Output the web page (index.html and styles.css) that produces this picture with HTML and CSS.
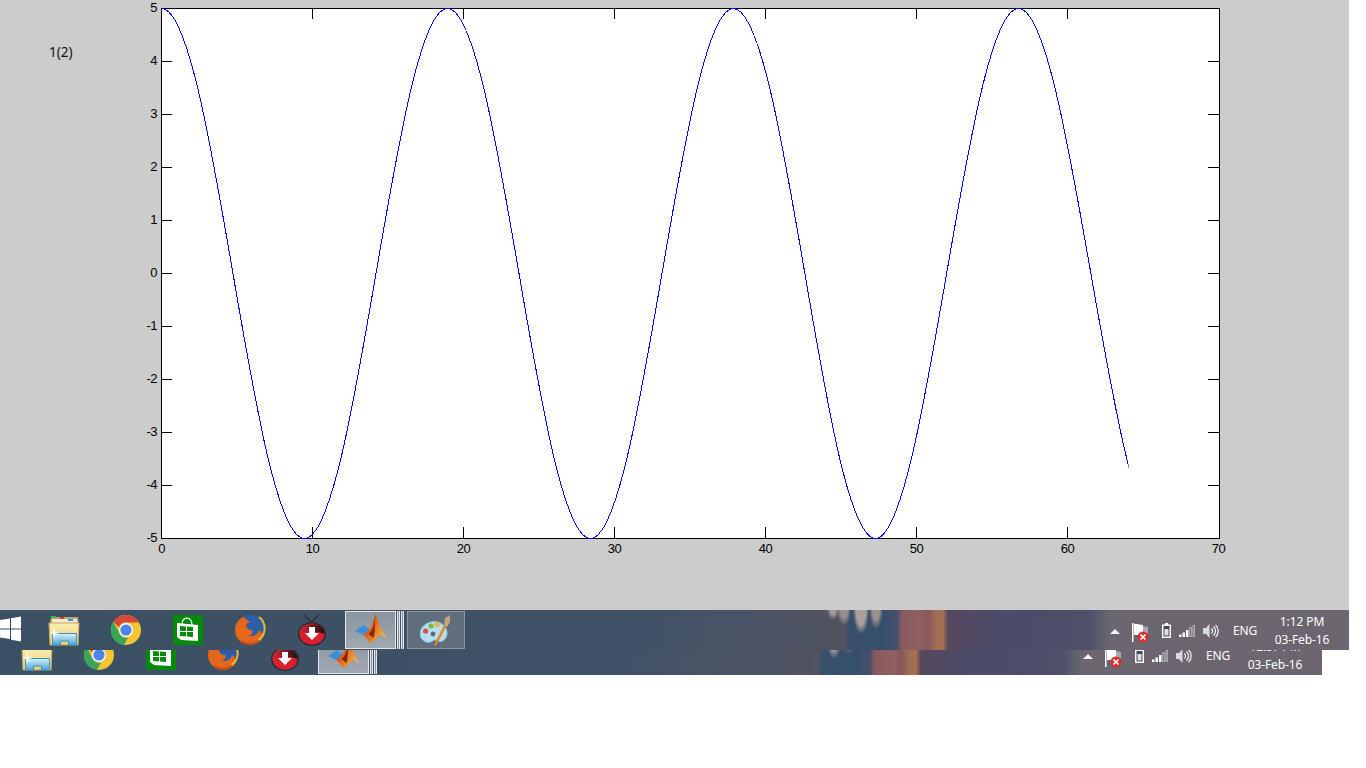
FILE: index.html
```html
<!DOCTYPE html>
<html lang="en">
<head>
    <meta charset="UTF-8">
    <meta name="viewport" content="width=device-width, initial-scale=1.0">
    <title>Figure 1</title>
    <link rel="stylesheet" href="styles.css">
</head>
<body>
    <!-- shared taskbar icons -->
    <svg class="defs" width="0" height="0">
        <defs>
            <linearGradient id="folder-fill" x1="0" y1="0" x2="0" y2="1">
                <stop offset="0" stop-color="#fbeeb4"/>
                <stop offset="1" stop-color="#e8cc78"/>
            </linearGradient>
            <linearGradient id="glass-fill" x1="0" y1="0" x2="0" y2="1">
                <stop offset="0" stop-color="#d8f2fb"/>
                <stop offset="1" stop-color="#4aa3d6"/>
            </linearGradient>
            <linearGradient id="matlab-fill" x1="0" y1="0" x2="1" y2="0.7">
                <stop offset="0" stop-color="#a83214"/>
                <stop offset="0.5" stop-color="#e06a1c"/>
                <stop offset="1" stop-color="#f5bc48"/>
            </linearGradient>
            <linearGradient id="tv-top" x1="0" y1="0" x2="1" y2="0">
                <stop offset="0" stop-color="#e02632"/>
                <stop offset="0.55" stop-color="#7c1a20"/>
                <stop offset="1" stop-color="#141414"/>
            </linearGradient>
            <symbol id="i-folder" viewBox="0 0 32 32">
                <path d="M2 8l1-6h27l1 6z" fill="#b9a674"/>
                <path d="M4 4h25v4H4z" fill="#f4ecd0"/>
                <rect x="3" y="1" width="5" height="2" fill="#2fc045"/>
                <rect x="12" y="2" width="4" height="2" fill="#d43b2a"/>
                <rect x="20" y="4" width="5" height="2" fill="#2c9be0"/>
                <path d="M1 8h30l-1 22H2z" fill="url(#folder-fill)" stroke="#c6a658" stroke-width="1"/>
                <path d="M4.500 30v-11.500h24V30h-8v-4h-8v4z" fill="url(#glass-fill)" stroke="#3a93c8" stroke-width="1"/>
                <path d="M6 12l1 5 5 1-5 1-1 5-1-5-4-1 4-1z" fill="#fff"/>
            </symbol>
            <symbol id="i-chrome" viewBox="0 0 32 32">
                <circle cx="16" cy="16" r="15" fill="#f5c52f"/>
                <path d="M16 1a15 15 0 0 1 13 7.500H16a7.500 7.500 0 0 0-7 4.700L3.300 7.800A15 15 0 0 1 16 1z" fill="#d8483a"/>
                <path d="M3.300 7.800L9.500 19.500a7.500 7.500 0 0 0 8.500 4L14 31A15 15 0 0 1 3.300 7.800z" fill="#3aa45a"/>
                <circle cx="16" cy="16" r="7.200" fill="#f3f3f3"/>
                <circle cx="16" cy="16" r="5.600" fill="#4a86e8"/>
            </symbol>
            <symbol id="i-store" viewBox="0 0 30 30">
                <rect width="30" height="30" fill="#028a0a"/>
                <path d="M9 9c0-8 10-8 10 1" fill="none" stroke="#fff" stroke-width="1.200"/>
                <path d="M4 8l21 2v16l-17-1-4-3z" fill="#fff"/>
                <path d="M7 11l6 .500v4.500H7zM14 11.500l6 .500v4h-6zM7 17h6v4.500l-6-.500zM14 17h6v5l-6-.500z" fill="#028a0a"/>
            </symbol>
            <symbol id="i-firefox" viewBox="0 0 32 32">
                <circle cx="16" cy="16" r="15" fill="#e4681c"/>
                <path d="M9 2C16-1 27 1 30 10c2 5 1 9 0 12-2-3-3-5-5-6-1 4-5 7-10 6 3-1 4-3 3-6-3 0-6-2-6-5 1-2 3-2 4-3-2-2-5-3-7-6z" fill="#2b5ea6"/>
                <path d="M25 3c4 3 6 8 5.500 13-.500 5-3 8-6 10" fill="none" stroke="#eeb838" stroke-width="2"/>
                <path d="M7 27c5 4 13 4 18 0" fill="none" stroke="#c84a14" stroke-width="2"/>
            </symbol>
            <symbol id="i-tv" viewBox="0 0 28 32">
                <path d="M6 1l7 7 8-7" fill="none" stroke="#2c3138" stroke-width="1.500"/>
                <ellipse cx="14" cy="20" rx="14" ry="12" fill="#2a2e36"/>
                <ellipse cx="14" cy="20" rx="12.500" ry="10.500" fill="#dc1f2c"/>
                <path d="M1.500 20a12.500 10.500 0 0 1 25 0c-8-3-17-3-25 0z" fill="url(#tv-top)"/>
                <path d="M11 13h6v6h4l-7 7-7-7h4z" fill="#fff"/>
            </symbol>
            <symbol id="i-matlab" viewBox="0 0 32 32">
                <path d="M0 17l8.500-6 7 5-7 5z" fill="#3d8fd6"/>
                <path d="M15.500 14L20.500 0c3 8 6 17 11 24-2 0-4-2-6-4-3 3-7 8-10.500 9-2-3-4-6-6.500-8z" fill="url(#matlab-fill)"/>
                <path d="M20.500 0c-1 9-2 15-6 19l-1 1 5 4c2-6 1-16 2-24z" fill="#8e2410"/>
            </symbol>
            <symbol id="i-paint" viewBox="0 0 32 32">
                <path d="M0 19C1 11 10 6 18 8c6 2 10 7 9 13-1 5-6 8-9 6-2-2-4-1-7 1-5 2-12-3-11-9z" fill="#b4def0" stroke="#7fbcd8" stroke-width="1"/>
                <circle cx="5.600" cy="17" r="2.600" fill="#d8503e"/>
                <circle cx="11" cy="12" r="2.600" fill="#79b84a"/>
                <circle cx="17" cy="10.500" r="2.600" fill="#e6b82c"/>
                <circle cx="13" cy="20" r="2.400" fill="#566b7c"/>
                <path d="M14 31l10-20 2.500 1L16 32z" fill="#e8861f"/>
                <path d="M24 11l1-7 5-3 0 7-3 5z" fill="#c9a278"/>
            </symbol>
            <symbol id="i-flag" viewBox="0 0 20 20">
                <rect x="1" y="0" width="1.500" height="19" fill="#fff"/>
                <path d="M3 1c3-1 6 1 9 1v7l-3 3H3z" fill="#fff"/>
                <path d="M12 3l5 1v6h-5z" fill="#a9a6ad"/>
                <circle cx="12" cy="14" r="5.500" fill="#d8312d"/>
                <path d="M9.500 11.500l5 5M14.500 11.500l-5 5" stroke="#fff" stroke-width="1.600"/>
            </symbol>
            <symbol id="i-battery" viewBox="0 0 9 15">
                <path d="M3 0h3v1.500h3V15H0V1.500h3z" fill="#fff"/>
                <rect x="1.500" y="3" width="6" height="10.500" fill="#3f4656"/>
                <rect x="2.500" y="6" width="4" height="6.500" fill="#dfe1e4"/>
            </symbol>
            <symbol id="i-signal" viewBox="0 0 16 12">
                <path d="M0 9.500h2.500V12H0z" fill="#fff"/>
                <path d="M3.500 7.500H6V12H3.500z" fill="#fff"/>
                <path d="M7 5h2.500v7H7z" fill="#fff"/>
                <path d="M10.700 2.700h2v9h-2zM14 .5h1.700V11.700H14z" fill="none" stroke="#c9ccd2" stroke-width="0.800"/>
            </symbol>
            <symbol id="i-speaker" viewBox="0 0 16 14">
                <path d="M0 4h3l3.500-4v14L3 10H0z" fill="#d5d8dc"/>
                <path d="M8.500 4.500a3.500 3.500 0 0 1 0 5M10.500 2.500a6 6 0 0 1 0 9M12.500 .8a8.500 8.500 0 0 1 0 12.400" fill="none" stroke="#fff" stroke-width="1.100"/>
            </symbol>
        </defs>
    </svg>

    <div class="screen">
        <div class="figure">
            <span class="fig-label">1(2)</span>
            <svg class="plot" width="1349" height="610" viewBox="0 0 1349 610">
                <clipPath id="plot-clip"><rect x="150" y="0" width="978.500" height="560"/></clipPath>
                <rect x="161.500" y="8.500" width="1058" height="530" fill="#fff" stroke="#000"/>

                <g class="ticks">
                    <path d="M161 61.500h11M161 114.500h11M161 167.500h11M161 220.500h11M161 273.500h11M161 326.500h11M161 379.500h11M161 432.500h11M161 485.500h11"/>
                    <path d="M1219 61.500h-11M1219 114.500h-11M1219 167.500h-11M1219 220.500h-11M1219 273.500h-11M1219 326.500h-11M1219 379.500h-11M1219 432.500h-11M1219 485.500h-11"/>
                    <path d="M312.500 538v-11M463.500 538v-11M614.500 538v-11M765.500 538v-11M916.500 538v-11M1067.500 538v-11"/>
                    <path d="M312.500 8v11M463.500 8v11M614.500 8v11M765.500 8v11M916.500 8v11M1067.500 8v11"/>
                </g>

                <path class="curve" clip-path="url(#plot-clip)" d="M161.500 8.500C213.600 8.500 252.300 538.500 304.500 538.500S395.300 8.500 447.500 8.500S538.300 538.500 590.500 538.500S681.300 8.500 733.500 8.500S824.300 538.500 875.500 538.500S966.300 8.500 1018.500 8.500S1111 538.500 1163.500 538.500"/>

                <g class="y-labels">
                    <text x="157" y="12">5</text>
                    <text x="157" y="65">4</text>
                    <text x="157" y="118">3</text>
                    <text x="157" y="171">2</text>
                    <text x="157" y="224">1</text>
                    <text x="157" y="277">0</text>
                    <text x="157" y="330">-1</text>
                    <text x="157" y="383">-2</text>
                    <text x="157" y="436">-3</text>
                    <text x="157" y="489">-4</text>
                    <text x="157" y="542">-5</text>
                </g>
                <g class="x-labels">
                    <text x="161.500" y="553">0</text>
                    <text x="312.500" y="553">10</text>
                    <text x="463.500" y="553">20</text>
                    <text x="614.500" y="553">30</text>
                    <text x="765.500" y="553">40</text>
                    <text x="916.500" y="553">50</text>
                    <text x="1067.500" y="553">60</text>
                    <text x="1218.500" y="553">70</text>
                </g>
            </svg>
        </div>

        <div class="taskbar">
            <div class="wall-fingers"></div>
            <svg class="win-logo" width="22" height="26" viewBox="0 0 22 26">
                <path d="M0 4l10-1.500V12.400H0zM11 2.200L21 .5V12.400H11zM0 13.400h10V23L0 21.500zM11 13.400h10V25.500L11 23.800z" fill="#fff"/>
            </svg>
            <div class="apps">
                <span class="app app-folder"><svg class="icon"><use href="#i-folder"/></svg></span>
                <span class="app app-chrome"><svg class="icon"><use href="#i-chrome"/></svg></span>
                <span class="app app-store"><svg class="icon"><use href="#i-store"/></svg></span>
                <span class="app app-firefox"><svg class="icon"><use href="#i-firefox"/></svg></span>
                <span class="app app-tv"><svg class="icon"><use href="#i-tv"/></svg></span>
                <span class="app app-matlab stacked"><svg class="icon"><use href="#i-matlab"/></svg></span>
                <span class="app app-paint"><svg class="icon"><use href="#i-paint"/></svg></span>
            </div>
            <div class="tray">
                <span class="caret"></span>
                <svg class="flag"><use href="#i-flag"/></svg>
                <svg class="battery"><use href="#i-battery"/></svg>
                <svg class="signal"><use href="#i-signal"/></svg>
                <svg class="speaker"><use href="#i-speaker"/></svg>
                <span class="lang">ENG</span>
                <span class="clock"><span>1:12 PM</span><span>03-Feb-16</span></span>
            </div>
        </div>
    </div>

    <div class="lower-strip">
        <div class="taskbar">
            <div class="wall-fingers"></div>
            <div class="apps">
                <span class="app app-folder"><svg class="icon"><use href="#i-folder"/></svg></span>
                <span class="app app-chrome"><svg class="icon"><use href="#i-chrome"/></svg></span>
                <span class="app app-store"><svg class="icon"><use href="#i-store"/></svg></span>
                <span class="app app-firefox"><svg class="icon"><use href="#i-firefox"/></svg></span>
                <span class="app app-tv"><svg class="icon"><use href="#i-tv"/></svg></span>
                <span class="app app-matlab stacked"><svg class="icon"><use href="#i-matlab"/></svg></span>
            </div>
            <div class="tray">
                <span class="caret"></span>
                <svg class="flag"><use href="#i-flag"/></svg>
                <svg class="battery"><use href="#i-battery"/></svg>
                <svg class="signal"><use href="#i-signal"/></svg>
                <svg class="speaker"><use href="#i-speaker"/></svg>
                <span class="lang">ENG</span>
                <span class="clock"><span>12:57 PM</span><span>03-Feb-16</span></span>
            </div>
        </div>
    </div>
</body>
</html>
```

FILE: styles.css
```css
html, body {
    margin: 0;
    background-color: #fff;
    overflow: hidden;
}
.defs {
    display: block;
    height: 0;
}
.screen {
    width: 1349px;
    background-color: #ccc;
    position: relative;
    z-index: 1;
}
.figure {
    height: 610px;
    position: relative;
}
.plot {
    display: block;
}
.fig-label {
    position: absolute;
    left: 49px;
    top: 43px;
    font: 13.500px "Noto Sans", sans-serif;
    color: #111;
}
.ticks path {
    fill: none;
    stroke: #000;
    shape-rendering: crispEdges;
}
.curve {
    fill: none;
    stroke: #00f;
    stroke-width: 1;
    shape-rendering: crispEdges;
}
.plot text {
    font: 13px "Liberation Sans", Arial, sans-serif;
    letter-spacing: -0.5px;
    fill: #000;
}
.y-labels text {
    text-anchor: end;
}
.x-labels text {
    text-anchor: middle;
}

/* taskbar, the lower one is the same bar seen behind the top one */
.taskbar {
    width: 1349px;
    height: 40px;
    position: relative;
    display: flex;
    align-items: center;
    overflow: hidden;
    background: linear-gradient(90deg, #3c5064 0, #3f5165 620px, #4b5366 760px, #50535f 835px, #52545f 845px, #3a506a 849px, #35506c 885px, #46506a 897px, #8a5a60 902px, #8f5e5e 922px, #86565e 928px, #a06c54 936px, #a87050 943px, #56485f 948px, #4a4c68 1000px, #4e5068 1090px, #58606e 1100px, #6c6670 1110px, #6d6570 1349px);
}
.wall-fingers {
    position: absolute;
    left: 826px;
    top: 0;
    width: 62px;
    height: 30px;
    background:
        radial-gradient(ellipse 6px 10px at 7px 0, #a59a96 40%, transparent),
        radial-gradient(ellipse 7px 15px at 18px 0, #9a8d8e 50%, transparent),
        radial-gradient(ellipse 8px 24px at 35px 0, #ac9f9c 60%, transparent),
        radial-gradient(ellipse 7px 19px at 50px 0, #9c8f8e 50%, transparent);
}
.win-logo {
    position: absolute;
    left: 0;
    top: 6px;
}
.apps {
    position: absolute;
    left: 0;
    top: 0;
    height: 40px;
    width: 470px;
}
.app {
    position: absolute;
    top: 5px;
    display: flex;
}
.icon {
    display: block;
    width: 32px;
    height: 32px;
}
.app-folder { left: 48px; }
.app-chrome { left: 110px; top: 4px; }
.app-store { left: 173px; top: 5px; }
.app-store .icon { width: 30px; height: 30px; }
.app-firefox { left: 234px; top: 4px; }
.app-tv { left: 298px; top: 4px; }
.app-tv .icon { width: 28px; height: 32px; }
.app-matlab {
    left: 345px;
    top: 1px;
    width: 51px;
    height: 38px;
    box-sizing: border-box;
    border: 1px solid #e4e7ea;
    align-items: center;
    justify-content: center;
    background: linear-gradient(#8a95a1, #a0a8b0);
}
.app-matlab.stacked {
    box-shadow: 1px 0 0 #3e5166, 2px 0 0 #e4e7ea, 3px 0 0 #8a95a1, 4px 0 0 #e4e7ea, 5px 0 0 #3e5166, 6px 0 0 #e4e7ea, 7px 0 0 #8a95a1, 8px 0 0 #e4e7ea;
}
.app-paint {
    left: 407px;
    top: 1px;
    width: 58px;
    height: 38px;
    box-sizing: border-box;
    border: 1px solid #8a95a1;
    align-items: center;
    justify-content: center;
    background-color: #5f6d7d;
}
.tray {
    position: absolute;
    left: 1110px;
    top: 0;
    height: 40px;
    width: 239px;
    color: #fff;
    font-family: "Noto Sans", "Open Sans", sans-serif;
}
.tray > * {
    position: absolute;
}
.caret {
    left: 0;
    top: 19px;
    width: 0;
    height: 0;
    border-left: 5px solid transparent;
    border-right: 5px solid transparent;
    border-bottom: 5px solid #f2f2f2;
}
.flag {
    left: 21px;
    top: 13px;
    width: 20px;
    height: 20px;
}
.battery {
    left: 52px;
    top: 13px;
    width: 9px;
    height: 15px;
}
.signal {
    left: 69px;
    top: 15px;
    width: 16px;
    height: 12px;
}
.speaker {
    left: 93px;
    top: 14px;
    width: 16px;
    height: 14px;
}
.lang {
    left: 123px;
    top: 13px;
    font-size: 12px;
    line-height: 16px;
    letter-spacing: -0.2px;
}
.clock {
    left: 162px;
    top: 3px;
    width: 60px;
    display: flex;
    flex-direction: column;
    align-items: center;
    font-size: 12px;
    line-height: 18px;
    letter-spacing: -0.1px;
    white-space: nowrap;
}

/* the rest of the older screenshot, only its lower part shows */
.lower-strip {
    width: 1322px;
    height: 25px;
    overflow: hidden;
}
.lower-strip .taskbar {
    margin-left: -27px;
    margin-top: -15px;
}
```
